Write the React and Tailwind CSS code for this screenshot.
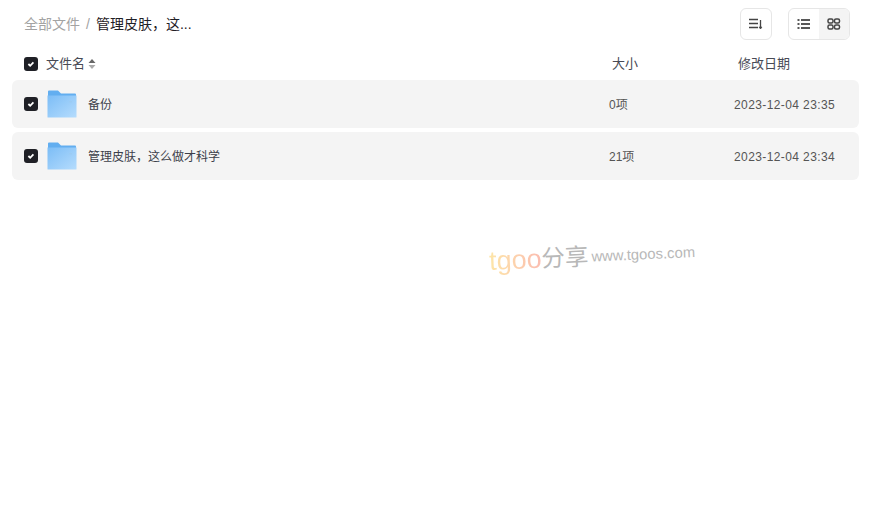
function Check() {
  return (
    <span className="w-[14px] h-[14px] rounded-[3px] bg-[#1f2026] flex items-center justify-center shrink-0">
      <svg width="10" height="10" viewBox="0 0 10 10" fill="none"><path d="M2.4 5 L4.2 6.8 L7.4 3.4" stroke="#fff" strokeWidth="1.8" /></svg>
    </span>
  );
}
function Folder() {
  return (
    <svg width="30" height="28" viewBox="0 0 30 28" className="shrink-0">
      <defs>
        <linearGradient id="fg" x1="0" y1="0" x2="1" y2="1">
          <stop offset="0" stopColor="#7cbdf6" />
          <stop offset="1" stopColor="#b5dcfd" />
        </linearGradient>
      </defs>
      <path d="M1 1.5 Q1 0.5 2 0.5 H11 L14 3.5 H28 Q29 3.5 29 4.5 V10 H1 Z" fill="#62aef0" />
      <path d="M0.5 5.5 H29.5 V27 Q29.5 27.5 29 27.5 H1 Q0.5 27.5 0.5 27 Z" fill="url(#fg)" />
      <rect x="22" y="11" width="3" height="1.5" fill="#9ccbf3" />
    </svg>
  );
}
function Row({ name, size, date }) {
  return (
    <div className="h-12 ml-3 mr-[15px] rounded-md bg-[#f4f4f4] flex items-center text-xs text-[#3c3f4a]">
      <span className="ml-3"><Check /></span>
      <span className="ml-[9px]"><Folder /></span>
      <span className="ml-[11px] w-[521px] pt-[1px]">{name}</span>
      <span className="w-[125px] text-[#555] pt-[1px]">{size}</span>
      <span className="text-[#555] tracking-[0.4px] pt-[1px]">{date}</span>
    </div>
  );
}
export default function App() {
  return (
    <div className="relative w-[874px] h-[514px] bg-white overflow-hidden" style={{ fontFamily: '"Liberation Sans","Noto Sans CJK SC",sans-serif' }}>
      <div className="h-[48px] pl-6 pr-6 flex items-center">
        <span className="text-[14px] text-[#a3a3a3]">全部文件</span>
        <span className="text-[14px] text-[#a3a3a3] mx-[6px]">/</span>
        <span className="text-[14px] text-[#1f2026]">{"管理皮肤\uFF0C这..."}</span>
        <div className="ml-auto flex items-center gap-[6px]">
          <button className="w-8 h-8 rounded-md border border-[#e6e6e6] flex items-center justify-center">
            <svg width="14" height="12" viewBox="0 0 14 12" stroke="#444" fill="none" strokeWidth="1.3">
              <path d="M0 1.5H9M0 5.5H9M0 9.5H9" />
              <path d="M11.5 2V10.5" />
              <path d="M10 9L11.5 11L13 9Z" fill="#444" strokeWidth="0.6" />
            </svg>
          </button>
          <div className="ml-[10px] w-[62px] h-8 rounded-md border border-[#e6e6e6] flex overflow-hidden">
            <span className="w-[30px] flex items-center justify-center">
              <svg width="14" height="10" viewBox="0 0 14 10" stroke="#222" strokeWidth="1.3">
                <path d="M0.5 1H2.5M4 1H13M0.5 5H2.5M4 5H13M0.5 9H2.5M4 9H13" />
              </svg>
            </span>
            <span className="flex-1 bg-[#f4f4f4] flex items-center justify-center">
              <svg width="14" height="12" viewBox="0 0 14 12" fill="none" stroke="#444" strokeWidth="1.5">
                <rect x="1" y="1" width="5" height="4" rx="1.5" />
                <rect x="7.5" y="1" width="5" height="4" rx="1.5" />
                <rect x="1" y="7" width="5" height="4" rx="1.5" />
                <rect x="7.5" y="7" width="5" height="4" rx="1.5" />
              </svg>
            </span>
          </div>
        </div>
      </div>
      <div className="h-8 flex items-center text-[13px] text-[#484a55]">
        <span className="ml-6"><Check /></span>
        <span className="ml-2">文件名</span>
        <svg width="8" height="12" viewBox="0 0 8 12" className="ml-[3px]">
          <path d="M4 1L7.5 5H0.5Z" fill="#666" />
          <path d="M4 11L7.5 7H0.5Z" fill="#aaa" />
        </svg>
        <span className="ml-[516px] w-[126px]">大小</span>
        <span>修改日期</span>
      </div>
      <div className="flex flex-col gap-1">
        <Row name="备份" size="0项" date="2023-12-04 23:35" />
        <Row name={"管理皮肤\uFF0C这么做才科学"} size="21项" date="2023-12-04 23:34" />
      </div>
      <div className="absolute left-[489px] top-[243px] flex items-end -rotate-[2.5deg] origin-left whitespace-nowrap">
        <span className="text-[27px] leading-[36px] bg-gradient-to-r from-[#fde6a8] to-[#fbbcb0] bg-clip-text text-transparent">tgoo</span>
        <span className="text-[23.5px] leading-[36px] text-[#b8b8b8]">分享</span>
        <span className="text-[14.8px] leading-[32px] ml-[3px] -translate-y-[2px] text-[#b8b8b8]">www.tgoos.com</span>
      </div>
    </div>
  );
}
